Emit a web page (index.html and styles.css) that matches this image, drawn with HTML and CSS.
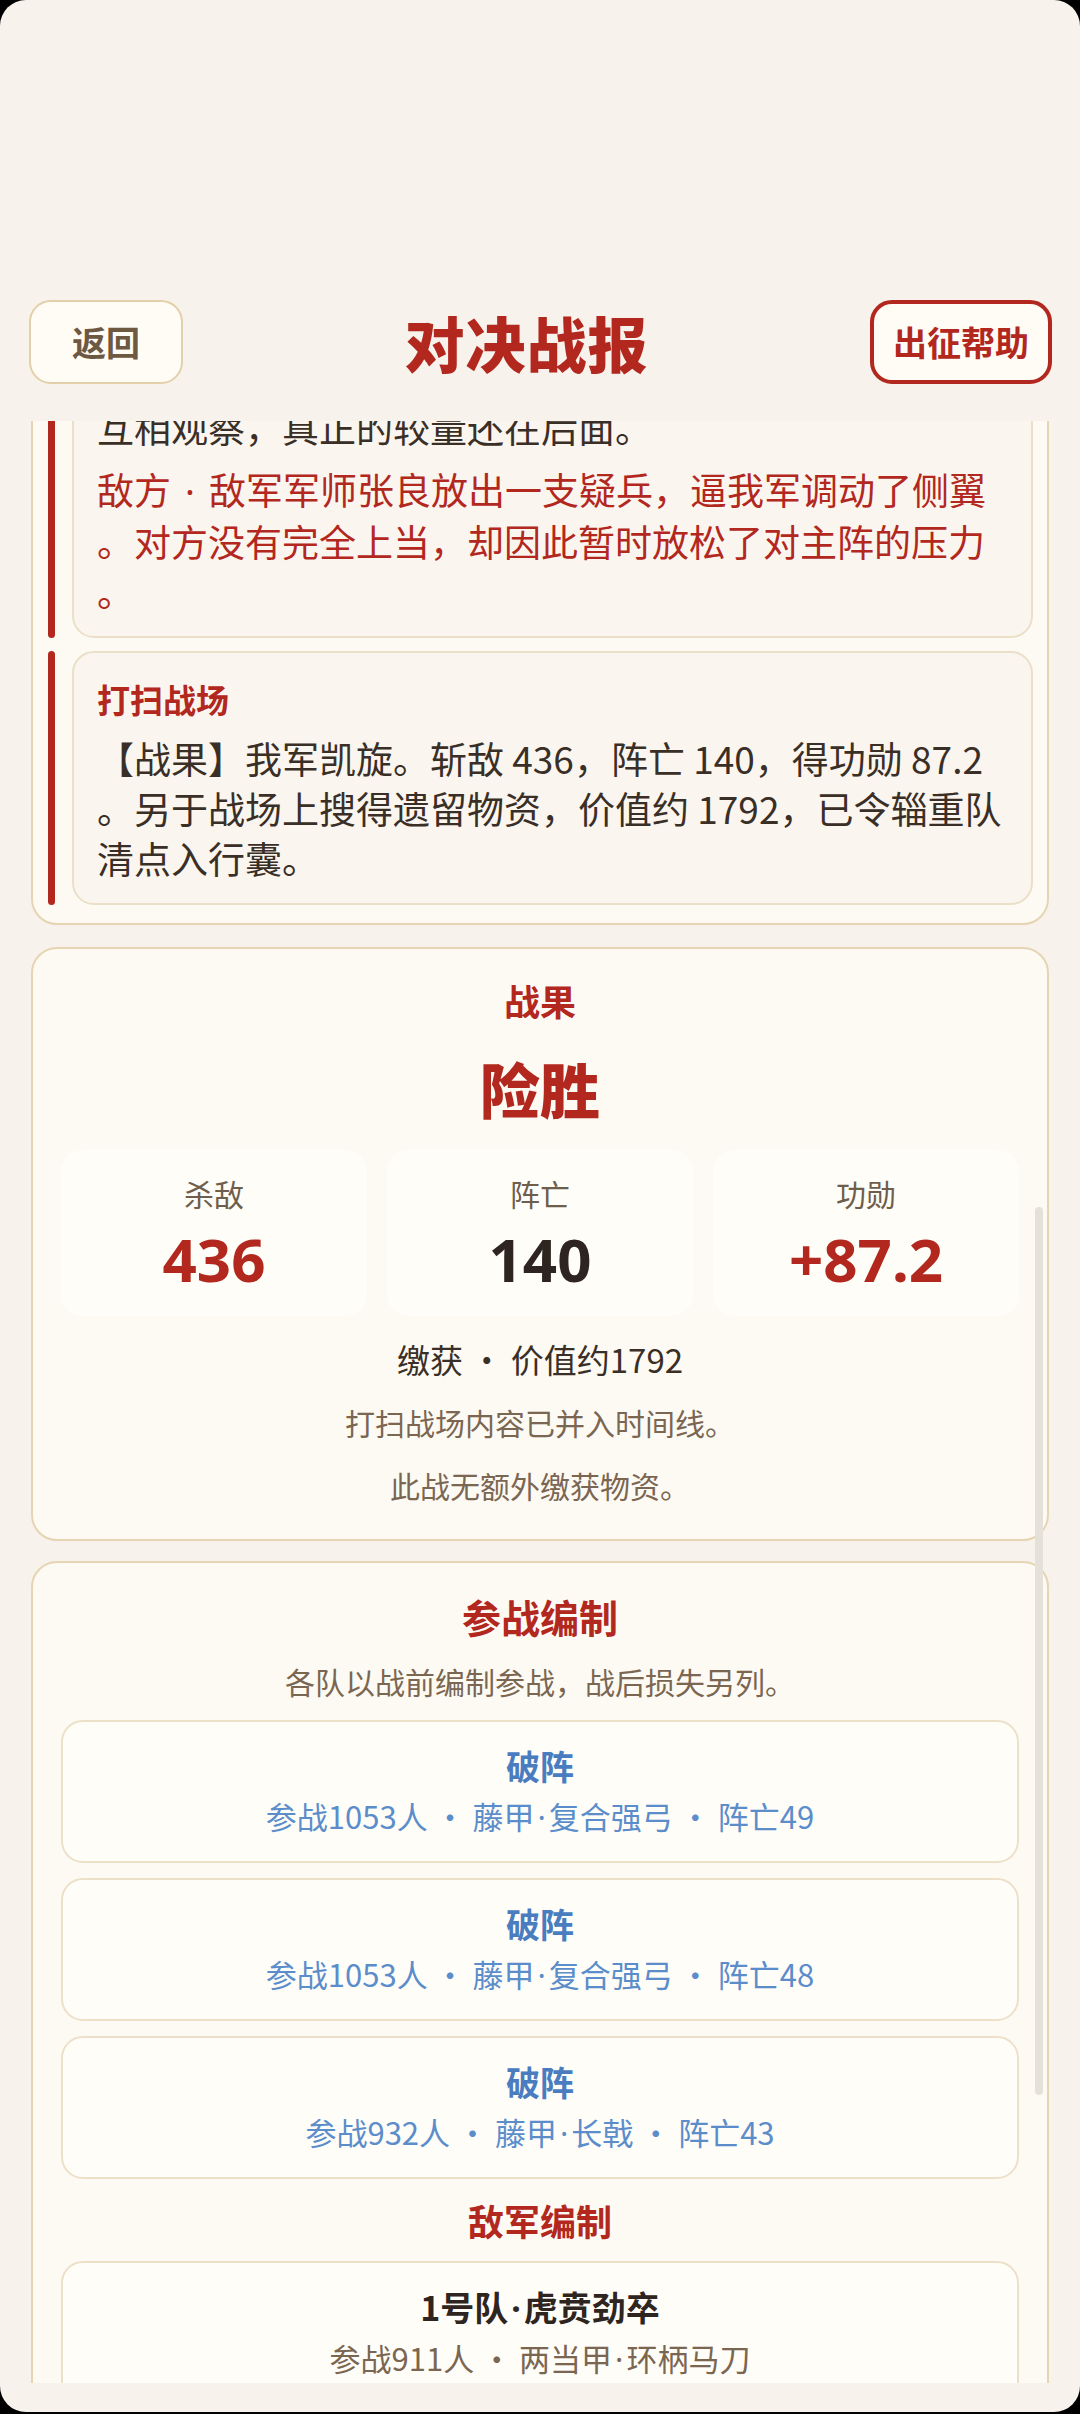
FILE: index.html
```html
<!DOCTYPE html>
<html lang="zh-CN">
<head>
    <meta charset="UTF-8">
    <meta name="viewport" content="width=device-width, initial-scale=1.0">
    <title>对决战报</title>
    <link rel="stylesheet" href="styles.css">
</head>
<body>
    <div class="screen">
        <header class="topbar">
            <button class="btn-back">返回</button>
            <h1 class="page-title">对决战报</h1>
            <button class="btn-help">出征帮助</button>
        </header>

        <main class="scroller">
            <!-- 战斗时间线 -->
            <section class="card timeline">
                <div class="tl-row">
                    <span class="tl-bar"></span>
                    <div class="tl-entry">
                        <p class="tl-text">互相观察，真正的较量还在后面。</p>
                        <p class="tl-text enemy">敌方<span class="sep">·</span>敌军军师张良放出一支疑兵，逼我军调动了侧翼<br>。对方没有完全上当，却因此暂时放松了对主阵的压力<br>。</p>
                    </div>
                </div>
                <div class="tl-row">
                    <span class="tl-bar"></span>
                    <div class="tl-entry">
                        <h3 class="tl-title">打扫战场</h3>
                        <p class="tl-text">【战果】我军凯旋。斩敌 436，阵亡 140，得功勋 87.2<br>。另于战场上搜得遗留物资，价值约 1792，已令辎重队<br>清点入行囊。</p>
                    </div>
                </div>
            </section>

            <!-- 战果 -->
            <section class="card result">
                <h2 class="section-title">战果</h2>
                <div class="verdict">险胜</div>
                <div class="stats">
                    <div class="stat">
                        <div class="stat-label">杀敌</div>
                        <div class="stat-value red">436</div>
                    </div>
                    <div class="stat">
                        <div class="stat-label">阵亡</div>
                        <div class="stat-value">140</div>
                    </div>
                    <div class="stat">
                        <div class="stat-label">功勋</div>
                        <div class="stat-value red">+87.2</div>
                    </div>
                </div>
                <div class="loot">缴获 · 价值约1792</div>
                <div class="note first">打扫战场内容已并入时间线。</div>
                <div class="note">此战无额外缴获物资。</div>
            </section>

            <!-- 编制 -->
            <section class="card roster">
                <h2 class="roster-title">参战编制</h2>
                <div class="roster-sub">各队以战前编制参战，战后损失另列。</div>
                <div class="unit-list">
                    <div class="unit ours">
                        <div class="unit-name">破阵</div>
                        <div class="unit-info">参战1053人 · 藤甲<span class="dot">·</span>复合强弓 · 阵亡49</div>
                    </div>
                    <div class="unit ours">
                        <div class="unit-name">破阵</div>
                        <div class="unit-info">参战1053人 · 藤甲<span class="dot">·</span>复合强弓 · 阵亡48</div>
                    </div>
                    <div class="unit ours">
                        <div class="unit-name">破阵</div>
                        <div class="unit-info">参战932人 · 藤甲<span class="dot">·</span>长戟 · 阵亡43</div>
                    </div>
                </div>
                <h3 class="enemy-title">敌军编制</h3>
                <div class="unit-list">
                    <div class="unit">
                        <div class="unit-name">1号队<span class="dot">·</span>虎贲劲卒</div>
                        <div class="unit-info">参战911人 · 两当甲<span class="dot">·</span>环柄马刀</div>
                    </div>
                </div>
            </section>
        </main>

        <div class="scrollbar"></div>
    </div>
</body>
</html>
```

FILE: styles.css
```css
* {
    box-sizing: border-box;
}
html, body {
    margin: 0;
    padding: 0;
    background: #000;
}
body {
    font-family: "Noto Sans CJK SC", "Noto Sans", sans-serif;
    color: #3a2f27;
}
h1, h2, h3, p {
    margin: 0;
}
.screen {
    position: relative;
    width: 1080px;
    height: 2412px;
    background: #f7f3ec;
    border-radius: 26px;
    overflow: hidden;
    display: flex;
    flex-direction: column;
    padding-bottom: 29px;
}

/* 顶栏 */
.topbar {
    display: flex;
    align-items: center;
    padding: 298px 28px 36px 29px;
    flex-shrink: 0;
}
.btn-back,
.btn-help {
    font-family: inherit;
    font-size: 34px;
    font-weight: 700;
    height: 84px;
    border-radius: 22px;
    background: #fffcf6;
    cursor: pointer;
}
.btn-back {
    width: 154px;
    border: 2px solid #e3cfaa;
    color: #6d5842;
}
.btn-help {
    padding: 0 19px;
    border: 4px solid #b3281e;
    color: #b3281e;
}
.page-title {
    flex: 1;
    text-align: center;
    font-size: 60px;
    font-weight: 900;
    color: #b3281e;
    letter-spacing: 1px;
}

/* 滚动区 */
.scroller {
    flex: 1;
    overflow: hidden;
    padding: 0 31px;
}
.card {
    background: #fdfaf4;
    border: 2px solid #e6d4b2;
    border-radius: 26px;
}
.dot {
    font-family: "Noto Sans", sans-serif;
    margin: 0 3px;
}
.sep {
    font-family: "Noto Sans", sans-serif;
    margin: 0 14px;
}

/* 时间线 */
.timeline {
    margin-top: -62px;
    padding: 15px 14px 18px 15px;
    display: flex;
    flex-direction: column;
    gap: 13px;
}
.tl-row {
    display: flex;
    gap: 17px;
}
.tl-bar {
    width: 7px;
    flex-shrink: 0;
    border-radius: 4px;
    background: #b3281e;
}
.tl-entry {
    flex: 1;
    background: #faf6ef;
    border: 2px solid #ebdfc8;
    border-radius: 22px;
    padding: 24px 16px 20px 23px;
}
.tl-title {
    font-size: 33px;
    line-height: 44px;
    font-weight: 700;
    color: #b3281e;
    margin-bottom: 12px;
}
.tl-text {
    font-size: 37px;
    line-height: 50px;
    color: #3a2f27;
    white-space: nowrap;
}
.tl-text.enemy {
    color: #b3281e;
    margin-top: 12px;
}

/* 战果 */
.result {
    margin-top: 22px;
    padding: 26px 28px 33px;
    text-align: center;
}
.section-title {
    font-size: 36px;
    line-height: 50px;
    font-weight: 700;
    color: #b3281e;
}
.verdict {
    margin-top: 23px;
    font-size: 60px;
    line-height: 80px;
    font-weight: 900;
    color: #b3281e;
}
.stats {
    margin-top: 22px;
    display: grid;
    grid-template-columns: repeat(3, 1fr);
    gap: 20px;
}
.stat {
    background: #fffdf8;
    border-radius: 22px;
    padding: 22px 0;
}
.stat-label {
    font-size: 30px;
    line-height: 42px;
    color: #6e5e4b;
}
.stat-value {
    margin-top: 10px;
    font-family: "Noto Sans", "Noto Sans CJK SC", sans-serif;
    font-size: 60px;
    line-height: 70px;
    font-weight: 700;
    color: #2e2520;
}
.stat-value.red {
    color: #b3281e;
}
.loot {
    margin-top: 20px;
    font-size: 33px;
    line-height: 46px;
    color: #3a2f27;
}
.note {
    margin-top: 21px;
    font-size: 30px;
    line-height: 42px;
    color: #7a6651;
}
.note.first {
    margin-top: 19px;
}

/* 编制 */
.roster {
    margin-top: 20px;
    padding: 26px 28px 40px;
    text-align: center;
}
.roster-title {
    font-size: 39px;
    line-height: 54px;
    font-weight: 700;
    color: #b3281e;
}
.roster-sub {
    margin-top: 17px;
    font-size: 30px;
    line-height: 42px;
    color: #7a6651;
}
.unit-list {
    margin-top: 18px;
    display: flex;
    flex-direction: column;
    gap: 15px;
}
.unit {
    background: #fffdf8;
    border: 2px solid #ece0c8;
    border-radius: 22px;
    padding: 20px 0 22px;
}
.unit-name {
    font-size: 34px;
    line-height: 48px;
    font-weight: 700;
    color: #2e2520;
}
.unit-info {
    margin-top: 4px;
    font-size: 31px;
    line-height: 44px;
    color: #7a6651;
}
.unit.ours .unit-name {
    color: #4a7cc0;
}
.unit.ours .unit-info {
    color: #5b8dcb;
}
.enemy-title {
    margin-top: 16px;
    font-size: 36px;
    line-height: 50px;
    font-weight: 700;
    color: #b3281e;
}
.enemy-title + .unit-list {
    margin-top: 16px;
}

/* 滚动条 */
.scrollbar {
    position: absolute;
    left: 1035px;
    top: 1207px;
    width: 8px;
    height: 888px;
    border-radius: 4px;
    background: #e6e1d8;
}
```
